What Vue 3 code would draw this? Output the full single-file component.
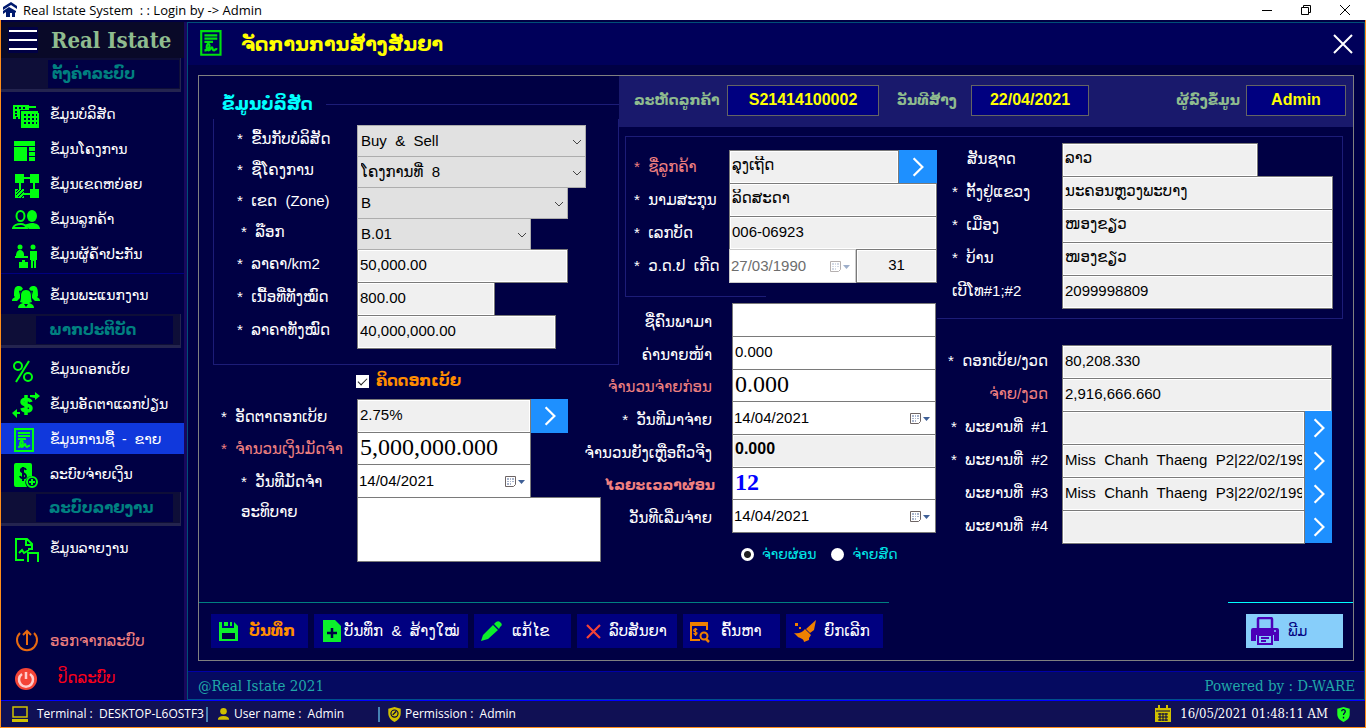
<script setup>
import { ref } from 'vue'

const setupItems = [
  { icon: 'buildings', text: 'ຂໍ້ມູນບໍລິສັດ' },
  { icon: 'project', text: 'ຂໍ້ມູນໂຄງການ' },
  { icon: 'zones', text: 'ຂໍ້ມູນເຂດຫຍ່ອຍ' },
  { icon: 'customers', text: 'ຂໍ້ມູນລູກຄ້າ' },
  { icon: 'guarantor', text: 'ຂໍ້ມູນຜູ້ຄ້ຳປະກັນ' }
]
const staffItems = [{ icon: 'staff', text: 'ຂໍ້ມູນພະແນກງານ' }]
const workItems = [
  { icon: 'percent', text: 'ຂໍ້ມູນດອກເບ້ຍ' },
  { icon: 'exchange', text: 'ຂໍ້ມູນອັດຕາແລກປ່ຽນ' },
  { icon: 'contract', text: 'ຂໍ້ມູນການຊື້  -  ຂາຍ', active: true },
  { icon: 'payment', text: 'ລະບົບຈ່າຍເງິນ' }
]
const reportItems = [{ icon: 'report', text: 'ຂໍ້ມູນລາຍງານ' }]

const selects = [
  { id: 'company', label: '*  ຂື້ນກັບບໍລິສັດ', value: 'Buy\u00a0\u00a0&\u00a0\u00a0Sell', size: 'w-xl' },
  { id: 'project', label: '*  ຊື່ໂຄງການ', value: 'ໂຄງການທີ່\u00a0\u00a08', size: 'w-xl' },
  { id: 'zone', label: '*  ເຂດ  (Zone)', value: 'B', size: 'w-lg' },
  { id: 'block', label: '*  ລ໊ອກ', value: 'B.01', size: 'w-md' }
]
const prices = [
  { id: 'price', label: '*  ລາຄາ/km2', value: '50,000.00', size: 'w-lg' },
  { id: 'area', label: '*  ເນື້ອທີ່ທັງໝົດ', value: '800.00', size: 'w-xs' },
  { id: 'total', label: '*  ລາຄາທັງໝົດ', value: '40,000,000.00', size: 'w-ml' }
]
const addresses = [
  { id: 'province', label: '*  ຕັ້ງຢູ່ແຂວງ', value: 'ນະຄອນຫຼວງພະບາງ' },
  { id: 'district', label: '*  ເມືອງ', value: 'ໜອງຂຽວ' },
  { id: 'village', label: '*  ບ້ານ', value: 'ໜອງຂຽວ' },
  { id: 'phone', label: 'ເບີໂທ#1;#2', value: '2099998809' }
]
const witnesses = [
  { id: 'w1', label: '*  ພະຍານທີ່  #1', value: '' },
  { id: 'w2', label: '*  ພະຍານທີ່  #2', value: 'Miss  Chanh  Thaeng  P2|22/02/1990' },
  { id: 'w3', label: 'ພະຍານທີ່  #3', value: 'Miss  Chanh  Thaeng  P3|22/02/1990' },
  { id: 'w4', label: 'ພະຍານທີ່  #4', value: '' }
]
const actions = [
  { icon: 'save', text: 'ບັນທຶກ', kind: 'primary' },
  { icon: 'savenew', text: 'ບັນທຶກ  &  ສ້າງໃໝ່', kind: 'wide' },
  { icon: 'pencil', text: 'ແກ້ໄຂ', kind: 'edit' },
  { icon: 'cross', text: 'ລົບສັນຍາ', kind: 'delete' },
  { icon: 'search', text: 'ຄົ້ນຫາ', kind: 'find' },
  { icon: 'broom', text: 'ຍົກເລີກ', kind: 'cancel' }
]
const interest = ref(true)
const payMode = ref('installment')
</script>

<template>
  <svg class="defs" aria-hidden="true">
    <symbol id="i-house" viewBox="0 0 16 16"><path d="M1 5 9 0l6 4v3L9 3 1 8zM1 9l6-4 7 4v2l-1-1v5h-3v-4H8v4H4v-5l-3 2zM5 8h2v1H5z" /></symbol>
    <symbol id="i-buildings" viewBox="0 0 28 28">
      <path d="M1 3h16v1h7v2h-7v2H8v9H6v-2H4v2H1z" /><path d="M9 9h17v2h1v15H9z" />
      <path class="cut" d="M3 5h2v2H3zM7 5h2v2H7zM11 5h2v2h-2zM3 9h2v2H3zM3 12h2v2H3zM12 12h2v2h-2zM16 12h2v2h-2zM20 12h2v2h-2zM12 16h2v2h-2zM16 16h2v2h-2zM20 16h2v2h-2zM12 20h2v2h-2zM16 20h2v2h-2zM20 20h2v2h-2zM24 12h1v2h-1zM24 16h1v2h-1zM24 20h1v2h-1z" />
    </symbol>
    <symbol id="i-project" viewBox="0 0 28 28"><path d="M2 4h21v5H2zM2 10h13v14H2zM17 10h6v4h-6zM17 15h6v4h-6zM17 20h6v4h-6z" /></symbol>
    <symbol id="i-zones" viewBox="0 0 28 28">
      <path d="M3 2h9v3h6V2h9v9h-4v6h4v9h-9v-3h-6v3H3v-9h4v-6H3zM12 7v4H9v6h3v4h6v-4h3v-6h-3V7z" />
      <path class="line cut-line" d="m4 20 3-3M4 23l6-6M6 25l6-6M9 26l3-3" stroke-width="1" />
    </symbol>
    <symbol id="i-customers" viewBox="0 0 28 28">
      <ellipse class="line" cx="8.500" cy="9" rx="4" ry="5" stroke-width="2" /><ellipse cx="20" cy="9" rx="5" ry="6" />
      <path d="M12 18c3-1 5-2 8-2 4 0 8 2 8 6H17c-1-2-3-3-5-4z" /><path class="line" d="M1 21c1-3 4-4 8-4 3 0 5 2 6 4z" stroke-width="2" />
    </symbol>
    <symbol id="i-guarantor" viewBox="0 0 28 28">
      <circle cx="8" cy="5" r="2.500" /><circle cx="21" cy="5" r="2.500" />
      <path d="M4 14c0-4 2-6 4-6s4 2 4 4v2h4v2H3v-2zM18 9h7v9h-1v8h-2v-7h-1v7h-2v-8h-1zM8 20h2v-2h3v2h3v6H7v-6z" />
    </symbol>
    <symbol id="i-staff" viewBox="0 0 28 28">
      <path d="M2 13C2 5 3 3 7 3c2 0 3 1 4 3-3 2-3 6-3 9l-3 3H0c0-3 2-3 3-4zM26 13c0-8-1-10-5-10-2 0-3 1-4 3 3 2 3 6 3 9l3 3h5c0-3-2-3-3-4z" />
      <path d="M14 7c4 0 5 3 5 6 0 2 0 4 1 6l-3 1c3 1 5 2 5 5H6c0-3 2-4 5-5l-3-1c1-2 1-4 1-6 0-3 1-6 5-6z" /><path class="cut" d="m12 21 2 3 2-3zM7 8q1-1 2 0l-1 4zM19 8q1-1 2 0l-1 4z" />
    </symbol>
    <symbol id="i-percent" viewBox="0 0 28 28">
      <g class="line" stroke-width="2"><ellipse cx="6" cy="9" rx="4" ry="4" /><ellipse cx="16" cy="20" rx="4" ry="4" /><path d="M17 4 4 25" /></g>
    </symbol>
    <symbol id="i-exchange" viewBox="0 0 28 28">
      <path class="line" d="M19 10c-1-3-9-4-9 0s9 2 9 6-8 4-9 0M14 3v20" stroke-width="3.500" />
      <path d="M18 5V3h5V0l5 4-5 4V6zM8 20v2H5v4l-5-5 5-4v3z" />
    </symbol>
    <symbol id="i-contract" viewBox="0 0 28 28">
      <path class="line" d="M3 2h18v22H3zM6 6h12M6 9h12M6 12h8" stroke-width="2" />
      <path class="line" d="M6 20c4 0 6-5 4-6s-3 6 0 6c2 0 2-3 3-3s0 3 2 3c1 0 1-2 3-1" stroke-width="2" />
    </symbol>
    <symbol id="i-payment" viewBox="0 0 28 28">
      <path d="M4 1h14q2 0 2 2v11c-5 0-8 5-6 9l1 2H4q-2 0-2-2V3q0-2 2-2z" /><path class="line cut-line" d="M14 8c-1-3-6-2-5 1 1 2 5 2 5 5s-5 3-6 0M11 5v14" stroke-width="2" />
      <circle class="line" cx="20" cy="20" r="5" stroke-width="2" /><path class="line" d="M17 20h6M20 17v6" stroke-width="2" />
    </symbol>
    <symbol id="i-report" viewBox="0 0 28 28"><path class="line" d="M12 24H4V3h11l5 5v5h-4M14 3v6h6M7 17l3-3 2 3 5-3M16 26v-9h10v9" stroke-width="2" /></symbol>
    <symbol id="i-exit" viewBox="0 0 28 28"><path class="line" d="M8 6a10 10 0 1 0 14 0M15 18V4M11 8l4-4 4 4" stroke-width="2" /></symbol>
    <symbol id="i-power" viewBox="0 0 28 28"><circle cx="14" cy="14" r="11" /><path class="line pale" d="M10 9a7 7 0 1 0 8 0M14 7v7" stroke-width="2.500" /></symbol>
    <symbol id="i-save" viewBox="0 0 24 24"><path d="M2 3h3v6h12V3l4 4v15H2z" /><path d="M7 3h4v4H7zM13 3h2v4h-2z" /><path class="cut" d="M5 14h13v6H5z" /></symbol>
    <symbol id="i-savenew" viewBox="0 0 24 24"><path d="M3 1h12l6 6v16H3z" /><path class="line cut-line" d="M12 9v10M7 14h10" stroke-width="2.500" /></symbol>
    <symbol id="i-pencil" viewBox="0 0 24 24"><path d="m13 6 5 5L8 20l-7 2 2-6zM14 5l2-2q3-2 5 1 2 2-1 4l-1 2z" /></symbol>
    <symbol id="i-cross" viewBox="0 0 24 24"><path class="line" d="m6 6 13 13M19 6 6 19" stroke-width="2.200" /></symbol>
    <symbol id="i-search" viewBox="0 0 24 24">
      <path d="M1 3h18v4H1z" /><path class="line" d="M11 21H2V5h16v6" stroke-width="2" /><circle class="line" cx="15" cy="17" r="3.500" stroke-width="2" /><path class="line" d="m17 20 3 3" stroke-width="2.500" />
      <path class="line" d="M8 11c-1-2-4-1-3 1l3 2c0 2-3 2-3 0M6.500 9v8" stroke-width="1.300" />
    </symbol>
    <symbol id="i-broom" viewBox="0 0 24 24"><path d="m24 1-2 10-4 3-4-4zM13 10l6 6-2 3v2l-5 2c0-3-4-4-6-5l-4-4c4 1 8 0 11-4zM3 4h3v3H3zM7 8h2v2H7z" /></symbol>
    <symbol id="i-printer" viewBox="0 0 28 28">
      <path class="line" d="M7 11V2q0-1 2-1h10q2 0 2 1v9" stroke-width="2.500" /><path d="M2 11h24q2 0 2 2v11h-5v-6H5v6H0V13q0-2 2-2z" /><path class="line" d="M7 18h14v9H7zM10 21h8M10 24h5" stroke-width="2" /><circle class="light" cx="24" cy="14" r="1" />
    </symbol>
    <symbol id="i-computer" viewBox="0 0 18 18"><path class="line" d="M2 2h14v10H2z" stroke-width="1.500" /><path d="M1 14h16v3H1z" /></symbol>
    <symbol id="i-user" viewBox="0 0 16 16"><circle cx="8" cy="5" r="3.500" /><path d="M2 14q0-4 6-4t6 4z" /></symbol>
    <symbol id="i-shield" viewBox="0 0 16 18"><path d="m8 1 7 2v5c0 5-3 8-7 10-4-2-7-5-7-10V3z" /><circle class="line cut-line" cx="8" cy="8.500" r="4" stroke-width="1.300" /><path class="line cut-line" d="m6 10 4-4" stroke-width="1.500" /></symbol>
    <symbol id="i-calendar" viewBox="0 0 18 18"><path d="M1 3h16v14H1zM4 0h2v5H4zM12 0h2v5h-2z" /><path class="line cut-line" d="M2 6h14M4 9h10M4 12h10M4 15h10M6 8v8M9 8v8M12 8v8" stroke-width="1" /></symbol>
    <symbol id="i-help" viewBox="0 0 16 18"><path d="m8 1 7 2v6c0 5-3 7-7 9-4-2-7-4-7-9V3z" /><path class="line cut-line" d="M6 6c0-3 4-2 4 0s-2 2-2 4M8 12v2" stroke-width="1.500" /></symbol>
    <symbol id="i-next" viewBox="0 0 20 20"><path class="line" d="m6 2 8 8-8 8" stroke-width="2" /></symbol>
    <symbol id="i-date" viewBox="0 0 22 14">
      <path fill="#fff" stroke="#6d6464" d="M1.500 1.500h10v8l-2 2h-8z" /><path fill="#a8b4cc" d="M3 3h2v2H3zM6 3h1v2H6zM8 3h2v2H8zM3 6h2v1H3zM6 6h1v1H6zM8 6h2v1H8zM3 8h2v2H3zM6 8h1v2H6z" /><path fill="#3e5f96" d="M14 5h7l-3.500 4z" />
    </symbol>
  </svg>

  <div class="window">
    <header class="titlebar">
      <svg class="app-icon"><use href="#i-house" /></svg>
      <span class="caption">Real Istate System&nbsp; : : Login by -&gt; Admin</span>
      <button class="win" aria-label="Minimize"><svg viewBox="0 0 12 12"><path d="M1 6.500h10" /></svg></button>
      <button class="win" aria-label="Restore"><svg viewBox="0 0 12 12"><path d="M1.500 3.500h7v7h-7zM3.500 3V1.500h7v7H9" /></svg></button>
      <button class="win" aria-label="Close window"><svg viewBox="0 0 12 12"><path d="m1 1 10 10M11 1 1 11" /></svg></button>
    </header>

    <div class="body">
      <nav class="sidebar">
        <div class="brand">
          <button class="burger" aria-label="Menu"><i></i><i></i><i></i></button>
          <span class="brand-name">Real Istate</span>
        </div>
        <div class="group"><h3>ຕັ້ງຄ່າລະບົບ</h3></div>
        <div class="items">
          <button v-for="m in setupItems" :key="m.text" class="item"><svg><use :href="'#i-' + m.icon" /></svg><span>{{ m.text }}</span></button>
        </div>
        <div class="items staff">
          <button v-for="m in staffItems" :key="m.text" class="item"><svg><use :href="'#i-' + m.icon" /></svg><span>{{ m.text }}</span></button>
        </div>
        <div class="group second"><h3>ພາກປະຕິບັດ</h3></div>
        <div class="items work">
          <button v-for="m in workItems" :key="m.text" class="item" :class="{ active: m.active }"><svg><use :href="'#i-' + m.icon" /></svg><span>{{ m.text }}</span></button>
        </div>
        <div class="group second"><h3>ລະບົບລາຍງານ</h3></div>
        <div class="items">
          <button v-for="m in reportItems" :key="m.text" class="item"><svg><use :href="'#i-' + m.icon" /></svg><span>{{ m.text }}</span></button>
        </div>
        <div class="session">
          <button class="item logout"><svg><use href="#i-exit" /></svg><span>ອອກຈາກລະບົບ</span></button>
          <button class="item shutdown"><svg><use href="#i-power" /></svg><span>ປິດລະບົບ</span></button>
        </div>
      </nav>

      <main class="main">
        <header class="page-head">
          <svg class="head-icon"><use href="#i-contract" /></svg>
          <h1>ຈັດການການສ້າງສັນຍາ</h1>
          <button class="close" aria-label="Close"><svg viewBox="0 0 20 20"><path d="m1 1 18 18M19 1 1 19" /></svg></button>
        </header>

        <div class="panel">
          <div class="form">
            <section class="left">
              <div class="legend"><h2>ຂໍ້ມູນບໍລິສັດ</h2><hr /></div>
              <div class="company-box">
                <div v-for="s in selects" :key="s.id" class="row pick">
                  <label :for="s.id" :class="{ nudge: s.id === 'block' }">{{ s.label }}</label>
                  <div class="combo" :class="s.size">
                    <select :id="s.id"><option>{{ s.value }}</option></select>
                    <svg viewBox="0 0 10 6"><path d="m1 1 4 4 4-4" /></svg>
                  </div>
                </div>
                <div v-for="p in prices" :key="p.id" class="row">
                  <label :for="p.id">{{ p.label }}</label>
                  <input :id="p.id" class="field off" :class="p.size" :value="p.value" readonly />
                </div>
              </div>

              <label class="interest"><input v-model="interest" type="checkbox" /><span>ຄິດດອກເບ້ຍ</span></label>
              <div class="row low">
                <label for="rate">*&nbsp;&nbsp;ອັດຕາດອກເບ້ຍ</label>
                <input id="rate" class="field off w-md" value="2.75%" readonly />
                <button class="go" aria-label="Choose rate"><svg><use href="#i-next" /></svg></button>
              </div>
              <div class="row low tight">
                <label for="deposit" class="warn">*&nbsp;&nbsp;ຈຳນວນເງິນມັດຈຳ</label>
                <input id="deposit" class="field big w-md" value="5,000,000.000" />
              </div>
              <div class="row low">
                <label for="depdate" class="nudge">*&nbsp;&nbsp;ວັນທີມັດຈຳ</label>
                <div class="date w-md"><input id="depdate" class="field" value="14/04/2021" /><button aria-label="Open calendar"><svg><use href="#i-date" /></svg></button></div>
              </div>
              <div class="row low note">
                <label for="note" class="nudge">ອະທິບາຍ</label>
                <textarea id="note" class="field"></textarea>
              </div>
            </section>

            <div class="right">
              <div class="topbar">
                <label for="code">ລະຫັດລູກຄ້າ</label><input id="code" class="code" value="S21414100002" readonly />
                <label for="created" class="created">ວັນທີສ້າງ</label><input id="created" class="created-in" value="22/04/2021" readonly />
                <label for="author" class="author">ຜູ້ລົງຂໍ້ມູນ</label><input id="author" class="author-in" value="Admin" readonly />
              </div>

              <div class="columns">
                <section class="mid">
                  <div class="customer">
                    <div class="row">
                      <label for="fname" class="warn">*&nbsp;&nbsp;ຊື່ລູກຄ້າ</label>
                      <input id="fname" class="field off grow" value="ລຸງເຖີດ" readonly />
                      <button class="go wide" aria-label="Choose customer"><svg><use href="#i-next" /></svg></button>
                    </div>
                    <div class="row"><label for="lname">*&nbsp;&nbsp;ນາມສະກຸນ</label><input id="lname" class="field off grow" value="ລິດສະດາ" readonly /></div>
                    <div class="row"><label for="idno">*&nbsp;&nbsp;ເລກບັດ</label><input id="idno" class="field off grow" value="006-06923" readonly /></div>
                    <div class="row">
                      <label for="dob">*&nbsp;&nbsp;ວ.ດ.ປ&nbsp;&nbsp;ເກີດ</label>
                      <div class="date disabled"><input id="dob" class="field" value="27/03/1990" disabled /><button aria-label="Open calendar" disabled><svg><use href="#i-date" /></svg></button></div>
                      <input class="field off age" aria-label="Age" value="31" readonly />
                    </div>
                  </div>

                  <div class="payment">
                    <div class="row"><label for="agent">ຊື່ຄົນພາມາ</label><input id="agent" class="field grow" /></div>
                    <div class="row"><label for="fee">ຄ່ານາຍໜ້າ</label><input id="fee" class="field grow" value="0.000" /></div>
                    <div class="row tight"><label for="prepaid" class="warn">ຈຳນວນຈ່າຍກ່ອນ</label><input id="prepaid" class="field big grow" value="0.000" /></div>
                    <div class="row"><label for="paydate">*&nbsp;&nbsp;ວັນທີມາຈ່າຍ</label><div class="date grow"><input id="paydate" class="field" value="14/04/2021" /><button aria-label="Open calendar"><svg><use href="#i-date" /></svg></button></div></div>
                    <div class="row"><label for="remain">ຈຳນວນຍັງເຫຼືອຕົວຈີງ</label><input id="remain" class="field off strong grow" value="0.000" readonly /></div>
                    <div class="row tight"><label for="term" class="warn strong">ໄລຍະເວລາຜ່ອນ</label><input id="term" class="field big term grow" value="12" /></div>
                    <div class="row"><label for="start">ວັນທີເລີ່ມຈ່າຍ</label><div class="date grow"><input id="start" class="field" value="14/04/2021" /><button aria-label="Open calendar"><svg><use href="#i-date" /></svg></button></div></div>
                    <div class="modes">
                      <label><input v-model="payMode" type="radio" value="installment" />ຈ່າຍຜ່ອນ</label>
                      <label><input v-model="payMode" type="radio" value="cash" />ຈ່າຍສົດ</label>
                    </div>
                  </div>
                </section>

                <section class="far">
                  <div class="address">
                    <div class="row"><label for="nation" class="plain">ສັນຊາດ</label><input id="nation" class="field off nation" value="ລາວ" readonly /></div>
                    <div v-for="a in addresses" :key="a.id" class="row"><label :for="a.id">{{ a.label }}</label><input :id="a.id" class="field off grow" :value="a.value" readonly /></div>
                  </div>
                  <div class="witness">
                    <div class="row"><label for="perint">*&nbsp;&nbsp;ດອກເບ້ຍ/ງວດ</label><input id="perint" class="field off grow" value="80,208.330" readonly /></div>
                    <div class="row"><label for="perpay" class="warn">ຈ່າຍ/ງວດ</label><input id="perpay" class="field off grow" value="2,916,666.660" readonly /></div>
                    <div v-for="w in witnesses" :key="w.id" class="row">
                      <label :for="w.id">{{ w.label }}</label><input :id="w.id" class="field off grow" :value="w.value" readonly />
                      <button class="go slim" aria-label="Choose witness"><svg><use href="#i-next" /></svg></button>
                    </div>
                  </div>
                </section>
              </div>
            </div>
          </div>

          <div class="rules"><hr class="teal" /><hr class="cyan" /></div>
          <div class="actions">
            <button v-for="a in actions" :key="a.icon" class="act" :class="a.kind"><svg><use :href="'#i-' + a.icon" /></svg><span>{{ a.text }}</span></button>
            <button class="print"><svg><use href="#i-printer" /></svg><span>ພີມ</span></button>
          </div>
        </div>

        <footer class="foot"><span>@Real Istate 2021</span><span>Powered by : D-WARE</span></footer>
      </main>
    </div>

    <footer class="status">
      <svg><use href="#i-computer" /></svg><span class="terminal">Terminal :&nbsp; DESKTOP-L6OSTF3</span>
      <i></i>
      <svg class="sm"><use href="#i-user" /></svg><span class="user">User name :&nbsp; Admin</span>
      <i></i>
      <svg class="sm"><use href="#i-shield" /></svg><span>Permission :&nbsp; Admin</span>
      <div class="clock"><svg><use href="#i-calendar" /></svg><time>16/05/2021 01:48:11 AM</time><svg class="sm help"><use href="#i-help" /></svg></div>
    </footer>
  </div>
</template>

<style>
body { margin: 0; background: #000044; }
</style>

<style scoped>
* { box-sizing: border-box; }
.defs { position: absolute; width: 0; height: 0; }
svg { fill: currentColor; display: block; flex: none; }
.line { fill: none; stroke: currentColor; }
.cut { fill: #000044; }
.cut-line { stroke: #000044; }
.pale { stroke: #fcc; }
.light { fill: #8cf; }
button { border: 0; padding: 0; background: none; color: inherit; font: inherit; cursor: pointer; }
h1, h2, h3, hr { margin: 0; }
hr { border: 0; }

.window { min-height: 100vh; display: flex; flex-direction: column; background: #000044; color: #fff; border: solid #ff8c1a; border-width: 0 1px 1px; font: 14px/20px "Liberation Sans", "DejaVu Sans", sans-serif; }
.titlebar { height: 20px; margin: 0 -1px; display: flex; align-items: center; background: #fff; color: #000; padding: 0 2px; }
.app-icon { width: 16px; height: 16px; color: #001a6e; }
.caption { flex: 1; margin-left: 5px; font: 13px/20px "Open Sans", sans-serif; }
.win { width: 39px; height: 20px; display: grid; place-items: center; }
.win svg { width: 12px; height: 12px; fill: none; stroke: #000; }
.body { flex: 1; display: flex; padding-top: 2px; }

.sidebar { width: 186px; flex: none; display: flex; flex-direction: column; border-right: 3px solid #18085c; }
.brand { height: 36px; display: flex; align-items: center; background: #090928; padding-left: 7px; }
.burger { width: 30px; height: 26px; display: flex; flex-direction: column; justify-content: space-around; background: #000044; padding: 0 1px; }
.burger i { height: 2px; background: #fff; }
.brand-name { margin-left: 13px; color: #8fbc8f; white-space: nowrap; font: bold 22px/24px "DejaVu Serif Condensed", "DejaVu Serif", serif; }
.group { height: 34px; margin-right: 3px; background: #0e0e38; border-bottom: 3px solid #24244f; border-right: 1px solid #24244f; padding: 2px 1px 1px 47px; }
.group h3 { height: 28px; background: #000044; color: #008080; font: bold 15px/28px "Liberation Sans", "DejaVu Sans", sans-serif; padding-left: 4px; }
.group.second { padding-left: 35px; padding-right: 7px; }
.group.second h3 { padding-left: 13px; }
.items { padding: 4px 0 2px; display: flex; flex-direction: column; }
.items.staff { border-top: 1px solid #000080; padding: 3px 0 2px; }
.items.work { padding: 3px 0 1px; }
.item { height: 31px; margin: 2px 0; display: flex; align-items: center; text-align: left; padding: 0 0 0 11px; font-size: 14px; white-space: pre; }
.item svg { width: 28px; height: 28px; margin-top: 5px; color: #00ff10; }
.item span { margin-left: 10px; }
.item.active { background: #1038dc; }
.session { margin-top: auto; padding-bottom: 5px; display: grid; gap: 2px; }
.session .item { font-size: 15px; }
.session .logout { color: #f08080; }
.session .logout svg { color: #e86a10; margin-top: 0; }
.session .shutdown { color: #ff0018; }
.session .shutdown svg { color: #f44336; margin-top: 2px; }
.session .shutdown span { margin-left: 18px; }

.main { flex: 1; min-width: 0; display: flex; flex-direction: column; border: solid #004f78; border-width: 1px 1px 0 1px; }
.page-head { height: 42px; display: flex; align-items: center; background: #00005a; padding: 0 11px 0 10px; }
.head-icon { width: 30px; height: 30px; color: #00e010; }
.page-head h1 { flex: 1; margin-left: 13px; padding-top: 2px; color: #ff0; font: bold 19px/30px "Liberation Sans", "DejaVu Sans", sans-serif; }
.close svg { width: 20px; height: 20px; fill: none; stroke: #fff; stroke-width: 2; }
.panel { flex: 1; display: flex; flex-direction: column; margin: 10px 10px 10px 10px; border: 1px solid #808080; }
.form { flex: 1; display: flex; }

.row { display: flex; height: 33px; }
.row.tight { height: 32px; }
.row.pick { height: 31px; }
.row > label { flex: none; display: flex; align-items: center; white-space: pre; font-size: 15px; }
.warn { color: #f08080; }
.field { height: 34px; min-width: 0; margin: 0; border: 1px solid #7a7a7a; border-radius: 0; background: #fff; color: #000; padding: 0 2px 4px; font: 15px/20px "Liberation Sans", "DejaVu Sans", sans-serif; outline: 0; }
.tight .field { height: 33px; }
.field.off { background: #f0f0f0; box-shadow: inset 0 0 0 1px #fff; }
.field.big { font: 24px/28px "Liberation Serif", serif; padding-bottom: 2px; }
.field.strong { font-weight: bold; font-size: 16px; }
.field.big.term { color: #00f; font-weight: bold; }
.grow { flex: 1; }
.w-xs { width: 138px; }
.w-md { width: 174px; }
.w-ml { width: 199px; }
.w-lg { width: 211px; }
.w-xl { width: 229px; }
.combo { position: relative; height: 32px; }
.combo select { width: 100%; height: 32px; appearance: none; border: 1px solid #adadad; border-radius: 0; background: #e1e1e1; color: #000; padding: 0 3px; font: 15px/20px "Liberation Sans", "DejaVu Sans", sans-serif; }
.combo svg { position: absolute; right: 4px; top: 14px; width: 10px; height: 6px; fill: none; stroke: #444; }
.date { position: relative; height: 34px; }
.date .field { width: 100%; padding-left: 1px; padding-bottom: 2px; }
.date button { position: absolute; right: 5px; top: 11px; }
.date svg { width: 22px; height: 14px; }
.date.disabled .field { color: #6d6d6d; border-color: #ccc; }
.date.disabled svg { opacity: 0.5; }
.go { width: 37px; height: 34px; flex: none; display: grid; place-items: center; background: #1e90ff; color: #fff; }
.go.wide { width: 38px; }
.go svg { width: 22px; height: 22px; }
.go.slim { width: 27px; height: 33px; }

.left { width: 420px; flex: none; padding: 14px 0 0 14px; }
.legend { height: 29px; display: flex; align-items: center; padding-left: 9px; }
.legend h2 { color: #0ff; font: bold 17px/24px "Liberation Sans", "DejaVu Sans", sans-serif; }
.legend hr { flex: 1; margin-left: 13px; border-top: 1px solid #1c1c78; }
.company-box { border: solid #1c1c78; border-width: 0 1px 1px; padding: 6px 0 16px; }
.company-box .row > label { width: 143px; padding: 0 0 3px 23px; }
.company-box .row > label.nudge { padding-left: 27px; }
.interest { display: flex; align-items: center; height: 20px; margin: 6px 0 8px 143px; color: #ff8c00; font-weight: bold; font-size: 15px; }
.interest input { margin: 0; width: 13px; height: 13px; appearance: none; background: #fff; position: relative; }
.interest input:checked::after { content: ""; position: absolute; left: 4px; top: 1px; width: 4px; height: 8px; border: solid #222; border-width: 0 1px 1px 0; transform: rotate(45deg); }
.interest span { margin-left: 7px; }
.row.low > label { width: 144px; padding: 2px 0 0 8px; }
.row.low > label.nudge { padding-left: 28px; }
.row.note { height: 65px; }
.row.note > label { height: 28px; }
.row.note .field { width: 244px; height: 65px; resize: none; }

.right { flex: 1; min-width: 0; display: flex; flex-direction: column; }
.topbar { height: 51px; display: flex; align-items: center; background: #19196c; padding: 0 7px 3px 15px; }
.topbar label { color: #8fbc8f; font-weight: bold; white-space: nowrap; width: 93px; }
.topbar input { height: 31px; width: 152px; background: #000080; border: 1px solid #646464; color: #ff0; text-align: center; font: bold 16px/20px "Liberation Sans", sans-serif; padding: 0; }
.topbar .created { margin-left: 18px; width: 74px; }
.topbar .created-in { width: 118px; }
.topbar .author { margin-left: auto; width: 70px; }
.topbar .author-in { width: 100px; }
.columns { flex: 1; display: flex; padding-top: 9px; }
.mid { width: 318px; flex: none; }
.customer { position: relative; margin-left: 6px; border: solid #1c1c78; border-width: 1px 0 0 1px; padding: 13px 0 15px; }
.customer::after { content: ""; position: absolute; left: 0; bottom: 0; width: 140px; border-bottom: 1px solid #1c1c78; }
.customer .row > label { width: 103px; padding-left: 8px; }
.customer .date { width: 127px; }
.customer .age { width: 81px; text-align: center; }
.payment { padding: 6px 1px 0 0; }
.payment .row > label { width: 113px; padding: 4px 20px 0 0; justify-content: flex-end; }
.payment .row > label.strong { font-weight: bold; font-size: 14px; padding-right: 17px; }
.modes { display: flex; gap: 15px; padding: 12px 0 0 122px; color: #00e5e5; }
.modes label { display: flex; align-items: center; white-space: nowrap; }
.modes input { appearance: none; width: 13px; height: 13px; margin: 0 8px 0 0; border-radius: 50%; background: #fff; }
.modes input:checked { background: radial-gradient(circle, #222 0 3px, #fff 4px); }
.far { flex: 1; min-width: 0; padding-right: 10px; }
.address { border: solid #1c1c78; border-width: 1px 1px 1px 0; padding: 6px 9px 10px 0; }
.far .row > label { width: 125px; padding: 0 0 2px 15px; }
.far .row > label.plain { padding-left: 30px; }
.nation { width: 196px; }
.witness { padding: 26px 11px 0 0; }
.witness .row > label { padding: 0 14px 2px 0; justify-content: flex-end; }

.rules { display: flex; justify-content: space-between; }
.teal { width: 690px; border-top: 1px solid #008080; }
.cyan { width: 125px; border-top: 1px solid #0ff; }
.actions { display: flex; gap: 6px; padding: 11px 10px 12px 12px; }
.act { height: 34px; width: 97px; display: flex; align-items: center; text-align: left; background: #000080; padding-left: 6px; white-space: pre; font-size: 15px; }
.act svg { width: 24px; height: 24px; color: #0cef2c; }
.act span { margin-left: 8px; }
.act.primary { color: #ff8c00; font-weight: bold; }
.act.wide { width: 154px; }
.act.wide span { margin-left: 0; }
.act.delete { width: 100px; padding-left: 4px; }
.act.delete span { margin-left: 4px; }
.act.delete svg { color: #f44336; }
.act.find svg, .act.cancel svg { color: #f08000; }
.print { margin-left: auto; width: 97px; height: 34px; display: flex; align-items: center; background: #87cefa; color: #000080; padding-left: 5px; }
.print svg { width: 28px; height: 28px; color: #4b00b8; }
.print span { margin-left: 9px; }

.foot { height: 29px; display: flex; justify-content: space-between; align-items: center; background: #050a60; border: solid; border-color: #0000a8 #050a60 #00508c; border-width: 1px 0; padding: 0 9px 0 10px; color: #20a8a8; font: 15px/20px "DejaVu Serif Condensed", "DejaVu Serif", serif; }
.status { height: 27px; display: flex; align-items: center; background: #101054; border-top: 1px solid #00f; padding: 0 14px 0 10px; font: 12px/18px "Open Sans", sans-serif; }
.status svg { width: 18px; height: 18px; color: #d0c000; }
.status .sm { width: 15px; height: 16px; }
.status .help { color: #2f2; }
.status i { width: 2px; height: 15px; background: #4682b4; margin: 0 8px; }
.status span { margin-left: 3px; white-space: nowrap; }
.status .terminal { margin-left: 8px; width: 161px; }
.status .user { width: 136px; }
.status .user + i { margin-right: 7px; }
.clock { margin-left: auto; display: flex; align-items: center; gap: 8px; font: 13px/18px "DejaVu Serif Condensed", "DejaVu Serif", serif; }
</style>
